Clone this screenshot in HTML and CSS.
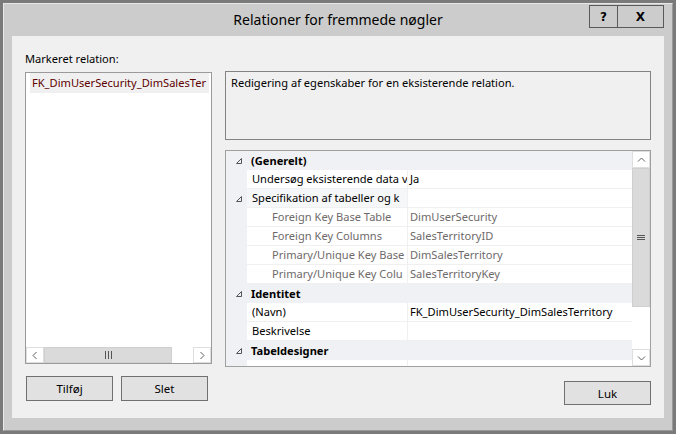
FILE: index.html
```
<!DOCTYPE html>
<html>
<head>
<meta charset="utf-8">
<link rel="stylesheet" href="styles.css">
</head>
<body>
<div class="window">
  <div class="titlebar">
    <div class="title">Relationer for fremmede nøgler</div>
    <div class="caption-btns">
      <div class="cbtn help">?</div>
      <div class="cbtn close">X</div>
    </div>
  </div>
  <div class="content">
    <div class="left">
      <div class="label">Markeret relation:</div>
      <div class="listbox">
        <div class="list-items">
          <div class="item">FK_DimUserSecurity_DimSalesTer</div>
        </div>
        <div class="hscroll">
          <div class="sb-arrow h"><svg width="8" height="9" viewBox="0 0 8 9"><polyline points="5.5,1 2,4.5 5.5,8" fill="none" stroke="#606060" stroke-width="1"/></svg></div>
          <div class="hthumb"><svg width="9" height="8" viewBox="0 0 9 8"><path d="M1.5 0V8M4.5 0V8M7.5 0V8" stroke="#555" stroke-width="1"/></svg></div>
          <div class="htrack"></div>
          <div class="sb-arrow h"><svg width="8" height="9" viewBox="0 0 8 9"><polyline points="2.5,1 6,4.5 2.5,8" fill="none" stroke="#606060" stroke-width="1"/></svg></div>
        </div>
      </div>
      <div class="btnrow">
        <button class="btn">Tilføj</button>
        <button class="btn">Slet</button>
      </div>
    </div>
    <div class="right">
      <div class="desc">Redigering af egenskaber for en eksisterende relation.</div>
      <div class="propgrid">
        <div class="rows">
          <div class="row cat">
            <div class="gutter"><svg class="tri" width="6" height="6" viewBox="0 0 6 6"><polygon points="5.5,0.5 5.5,5.5 0.5,5.5" fill="none" stroke="#555" stroke-width="1"/></svg></div>
            <div class="cat-label">(Generelt)</div>
          </div>
          <div class="row">
            <div class="gutter"></div>
            <div class="cell lab">Undersøg eksisterende data v</div>
            <div class="cell val">Ja</div>
          </div>
          <div class="row">
            <div class="gutter"><svg class="tri" width="6" height="6" viewBox="0 0 6 6"><polygon points="5.5,0.5 5.5,5.5 0.5,5.5" fill="none" stroke="#555" stroke-width="1"/></svg></div>
            <div class="cell lab tint">Specifikation af tabeller og k</div>
            <div class="cell val"></div>
          </div>
          <div class="row ro">
            <div class="gutter"></div>
            <div class="cell lab sub">Foreign Key Base Table</div>
            <div class="cell val">DimUserSecurity</div>
          </div>
          <div class="row ro">
            <div class="gutter"></div>
            <div class="cell lab sub">Foreign Key Columns</div>
            <div class="cell val">SalesTerritoryID</div>
          </div>
          <div class="row ro">
            <div class="gutter"></div>
            <div class="cell lab sub">Primary/Unique Key Base</div>
            <div class="cell val">DimSalesTerritory</div>
          </div>
          <div class="row ro">
            <div class="gutter"></div>
            <div class="cell lab sub">Primary/Unique Key Colu</div>
            <div class="cell val">SalesTerritoryKey</div>
          </div>
          <div class="row cat">
            <div class="gutter"><svg class="tri" width="6" height="6" viewBox="0 0 6 6"><polygon points="5.5,0.5 5.5,5.5 0.5,5.5" fill="none" stroke="#555" stroke-width="1"/></svg></div>
            <div class="cat-label">Identitet</div>
          </div>
          <div class="row">
            <div class="gutter"></div>
            <div class="cell lab">(Navn)</div>
            <div class="cell val">FK_DimUserSecurity_DimSalesTerritory</div>
          </div>
          <div class="row">
            <div class="gutter"></div>
            <div class="cell lab">Beskrivelse</div>
            <div class="cell val"></div>
          </div>
          <div class="row cat">
            <div class="gutter"><svg class="tri" width="6" height="6" viewBox="0 0 6 6"><polygon points="5.5,0.5 5.5,5.5 0.5,5.5" fill="none" stroke="#555" stroke-width="1"/></svg></div>
            <div class="cat-label">Tabeldesigner</div>
          </div>
          <div class="row">
            <div class="gutter"></div>
            <div class="cell lab"></div>
            <div class="cell val"></div>
          </div>
        </div>
        <div class="vscroll">
          <div class="sb-arrow v"><svg width="9" height="8" viewBox="0 0 9 8"><polyline points="1,5.5 4.5,2 8,5.5" fill="none" stroke="#606060" stroke-width="1"/></svg></div>
          <div class="vthumb"><svg width="8" height="7" viewBox="0 0 8 7"><path d="M0 1.5H8M0 3.5H8M0 5.5H8" stroke="#555" stroke-width="1"/></svg></div>
          <div class="vtrack"></div>
          <div class="sb-arrow v"><svg width="9" height="8" viewBox="0 0 9 8"><polyline points="1,2.5 4.5,6 8,2.5" fill="none" stroke="#606060" stroke-width="1"/></svg></div>
        </div>
      </div>
      <div class="footer">
        <button class="btn luk">Luk</button>
      </div>
    </div>
  </div>
</div>
</body>
</html>
```

FILE: styles.css
```
* { box-sizing: border-box; }

body {
  margin: 0;
  width: 676px;
  height: 434px;
  overflow: hidden;
  background: #7a7a7a;
  font-family: "Noto Sans", "Open Sans", sans-serif;
  font-size: 11.1px;
  color: #000;
}

.window {
  margin: 3px;
  width: 670px;
  height: 428px;
  border: 1px solid;
  border-color: #e8e8e8 #9a9a9a #9a9a9a #e8e8e8;
  background: #cccccc;
  display: flex;
  flex-direction: column;
}

.titlebar {
  height: 32px;
  flex: none;
  display: grid;
  grid-template-columns: 1fr auto 1fr;
  padding: 0 8px 0 8px;
}

.title {
  grid-column: 2;
  font-size: 14px;
  line-height: 31px;
  color: #000;
}

.caption-btns {
  grid-column: 3;
  justify-self: end;
  display: flex;
  margin-top: 1px;
}

.cbtn {
  height: 23px;
  border: 1px solid #5a5a5a;
  display: flex;
  align-items: center;
  justify-content: center;
  font-family: "DejaVu Sans", sans-serif;
  font-weight: bold;
  font-size: 12px;
  color: #000;
}

.help { width: 29px; }

.close { width: 46px; border-left: none; }

.content {
  flex: 1;
  margin: 0 8px 12px 8px;
  background: #f0f0f0;
  display: flex;
  gap: 13px;
  padding: 0 13px;
}

.left {
  width: 187px;
  display: flex;
  flex-direction: column;
}

.label {
  margin-top: 15px;
  height: 16px;
  line-height: 16px;
}

.listbox {
  margin-top: 5px;
  height: 292px;
  border: 1px solid #9a9a9a;
  background: #fff;
  display: flex;
  flex-direction: column;
}

.list-items {
  flex: 1;
  overflow: hidden;
}

.item {
  margin-left: 4px;
  width: 179px;
  height: 20px;
  line-height: 20px;
  padding-left: 2px;
  background: #f0f0f0;
  color: #5e0000;
  white-space: nowrap;
  overflow: hidden;
}

.hscroll {
  height: 16px;
  display: flex;
  background: #fff;
}

.sb-arrow {
  display: flex;
  align-items: center;
  justify-content: center;
  background: #fff;
  border: 1px solid #dedede;
}

.sb-arrow.h { width: 18px; }

.sb-arrow.v { height: 17px; }

.hthumb {
  width: 128px;
  background: #dadada;
  border: 1px solid #cfcfcf;
  display: flex;
  align-items: center;
  justify-content: center;
}

.htrack { flex: 1; background: #fff; }

.btnrow {
  margin-top: 12px;
  display: flex;
  gap: 8px;
  padding-left: 1px;
}

.btn {
  width: 87px;
  height: 25px;
  border: 1px solid #707070;
  background: #e1e1e1;
  font-family: inherit;
  font-size: 11.5px;
  color: #000;
  padding: 0;
}

.right {
  width: 426px;
  display: flex;
  flex-direction: column;
}

.desc {
  margin-top: 35px;
  height: 69px;
  border: 1px solid #838383;
  padding: 3px 5px;
  line-height: 16px;
}

.propgrid {
  margin-top: 10px;
  height: 217px;
  border: 1px solid #a0a0a0;
  background: #fff;
  display: flex;
  overflow: hidden;
}

.rows {
  flex: 1;
  overflow: hidden;
}

.row {
  display: grid;
  grid-template-columns: 21px 161px 1fr;
  height: 19px;
}

.gutter {
  background: #f0f1f4;
  display: flex;
  align-items: center;
  justify-content: flex-end;
  padding-right: 5px;
}

.cat { background: #f0f1f4; }

.cat-label {
  grid-column: 2 / 4;
  font-weight: bold;
  line-height: 19px;
  padding-left: 4px;
}

.cell {
  border-bottom: 1px solid #f0f0f0;
  line-height: 18px;
  white-space: nowrap;
  overflow: hidden;
}

.lab {
  padding-left: 5px;
  border-right: 1px solid #f0f0f0;
}

.lab.tint { background: #f6f7f9; }

.lab.sub { padding-left: 25px; }

.val { padding-left: 2px; }

.ro .cell { color: #6e6a6a; }

.vscroll {
  width: 18px;
  display: flex;
  flex-direction: column;
  background: #fff;
}

.vthumb {
  height: 139px;
  background: #dadada;
  border: 1px solid #cfcfcf;
  display: flex;
  align-items: center;
  justify-content: center;
}

.vtrack { flex: 1; background: #fff; }

.footer {
  margin-top: 14px;
  display: flex;
  justify-content: flex-end;
}

.btn.luk { height: 24px; }
```
